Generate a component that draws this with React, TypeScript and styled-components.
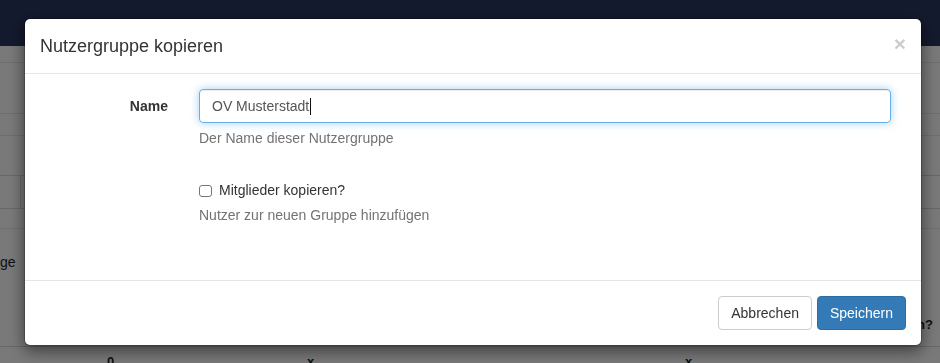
import React from 'react';
import styled, { createGlobalStyle } from 'styled-components';

const GlobalStyle = createGlobalStyle`
    * {
        box-sizing: border-box;
    }

    html,
    body {
        margin: 0;
        padding: 0;
    }

    body {
        font-family: "Liberation Sans", Helvetica, Arial, sans-serif;
        font-size: 14px;
        line-height: 1.42857;
        color: #333;
        background: #f2f2f2;
        overflow: hidden;
    }
`;

/* page behind the modal */

const Page = styled.div`
    height: 363px;
    display: flex;
    flex-direction: column;
    background: #f2f2f2;
`;

const Navbar = styled.div`
    flex: none;
    height: 46px;
    background: #28355c;
`;

const Band = styled.div<{ $height: number }>`
    flex: none;
    height: ${(p) => p.$height}px;
    border-bottom: 1px solid #dcdcdc;
`;

const FilterBar = styled.div`
    flex: none;
    display: flex;
    height: 34px;
    margin-top: 39px;
    border-top: 1px solid #cfcfcf;
    border-bottom: 1px solid #cfcfcf;

    .addon {
        width: 21px;
        border-right: 1px solid #cfcfcf;
    }
`;

const InfoRow = styled.div`
    flex: none;
    margin-top: 23px;
    line-height: 20px;
    font-size: 14px;
    color: #222;
`;

const QuestionRow = styled.div`
    flex: none;
    margin-top: 43px;
    padding-right: 7px;
    text-align: right;
    font-size: 13px;
    font-weight: bold;
    line-height: 20px;
    color: #222;
`;

const TableHead = styled.div`
    flex: none;
    display: grid;
    grid-template-columns: 107px 200px 378px 1fr;
    margin-top: 11px;
    padding-top: 5px;
    border-top: 1px solid #cfcfcf;
    font-size: 13px;
    font-weight: bold;
    line-height: 20px;
    color: #222;
`;

/* modal */

const Backdrop = styled.div`
    position: fixed;
    inset: 0;
    background: rgba(0, 0, 0, 0.5);
`;

const ModalLayer = styled.div`
    position: fixed;
    inset: 0;
`;

const Dialog = styled.div`
    width: 898px;
    margin: 18px 0 0 24px;
    background: #fff;
    background-clip: padding-box;
    border: 1px solid rgba(0, 0, 0, 0.2);
    border-radius: 6px;
    box-shadow: 0 5px 15px rgba(0, 0, 0, 0.5);
`;

const Header = styled.div`
    display: flex;
    align-items: flex-start;
    justify-content: space-between;
    padding: 15px;
    border-bottom: 1px solid #e5e5e5;
`;

const Title = styled.h4`
    margin: 0;
    font-size: 18px;
    font-weight: 500;
    line-height: 24px;
    color: #333;
`;

const Close = styled.button`
    margin-top: -1px;
    padding: 0;
    border: 0;
    background: none;
    font-family: inherit;
    font-size: 21px;
    font-weight: bold;
    line-height: 1;
    color: #000;
    text-shadow: 0 1px 0 #fff;
    opacity: 0.2;
    cursor: pointer;
`;

const Body = styled.div`
    padding: 15px 15px 30px;
`;

const FormGroup = styled.div`
    display: grid;
    grid-template-columns: 128px 1fr;
    column-gap: 31px;
    padding-right: 15px;
    margin-bottom: 15px;
`;

const ControlLabel = styled.label`
    padding-top: 7px;
    text-align: right;
    font-weight: bold;
    line-height: 20px;
`;

const TextField = styled.div`
    display: flex;
    align-items: center;
    height: 34px;
    padding: 6px 12px;
    border: 1px solid #66afe9;
    border-radius: 4px;
    box-shadow: inset 0 1px 1px rgba(0, 0, 0, 0.075), 0 0 8px rgba(102, 175, 233, 0.6);
    font-size: 14px;
    line-height: 20px;
    color: #555;
`;

const Caret = styled.span`
    width: 1px;
    height: 17px;
    margin-left: 1px;
    background: #111;
`;

const HelpBlock = styled.p`
    margin: 5px 0 10px;
    line-height: 20px;
    color: #737373;
`;

const CheckLabel = styled.label`
    display: flex;
    align-items: center;
    gap: 7px;
    padding-top: 7px;
    line-height: 20px;
    cursor: pointer;
`;

const CheckBox = styled.input.attrs({ type: 'checkbox' })`
    appearance: none;
    width: 13px;
    height: 12px;
    margin: 1px 0 0;
    border: 1px solid #767676;
    border-radius: 3px;
    background: #fff;
`;

const Footer = styled.div`
    display: flex;
    justify-content: flex-end;
    gap: 5px;
    padding: 15px;
    border-top: 1px solid #e5e5e5;
`;

const Button = styled.button<{ $primary?: boolean }>`
    padding: 6px 12px;
    font-family: inherit;
    font-size: 14px;
    line-height: 20px;
    border-radius: 4px;
    border: 1px solid ${(p) => (p.$primary ? '#2e6da4' : '#ccc')};
    background: ${(p) => (p.$primary ? '#337ab7' : '#fff')};
    color: ${(p) => (p.$primary ? '#fff' : '#333')};
    cursor: pointer;
`;

export default function App() {
    return (
        <>
            <GlobalStyle />
            <Page>
                <Navbar />
                <Band $height={17} />
                <Band $height={51} />
                <Band $height={22} />
                <FilterBar>
                    <div className="addon" />
                </FilterBar>
                <Band $height={20} />
                <InfoRow>ge</InfoRow>
                <QuestionRow>Aktion?</QuestionRow>
                <TableHead>
                    <span />
                    <span>0</span>
                    <span>x</span>
                    <span>x</span>
                </TableHead>
            </Page>
            <Backdrop />
            <ModalLayer>
                <Dialog role="dialog">
                    <Header>
                        <Title>Nutzergruppe kopieren</Title>
                        <Close aria-label="Schließen">×</Close>
                    </Header>
                    <Body>
                        <FormGroup>
                            <ControlLabel>Name</ControlLabel>
                            <div>
                                <TextField role="textbox">
                                    OV Musterstadt
                                    <Caret />
                                </TextField>
                                <HelpBlock>Der Name dieser Nutzergruppe</HelpBlock>
                            </div>
                        </FormGroup>
                        <FormGroup>
                            <span />
                            <div>
                                <CheckLabel>
                                    <CheckBox />
                                    Mitglieder kopieren?
                                </CheckLabel>
                                <HelpBlock>Nutzer zur neuen Gruppe hinzufügen</HelpBlock>
                            </div>
                        </FormGroup>
                    </Body>
                    <Footer>
                        <Button>Abbrechen</Button>
                        <Button $primary>Speichern</Button>
                    </Footer>
                </Dialog>
            </ModalLayer>
        </>
    );
}
